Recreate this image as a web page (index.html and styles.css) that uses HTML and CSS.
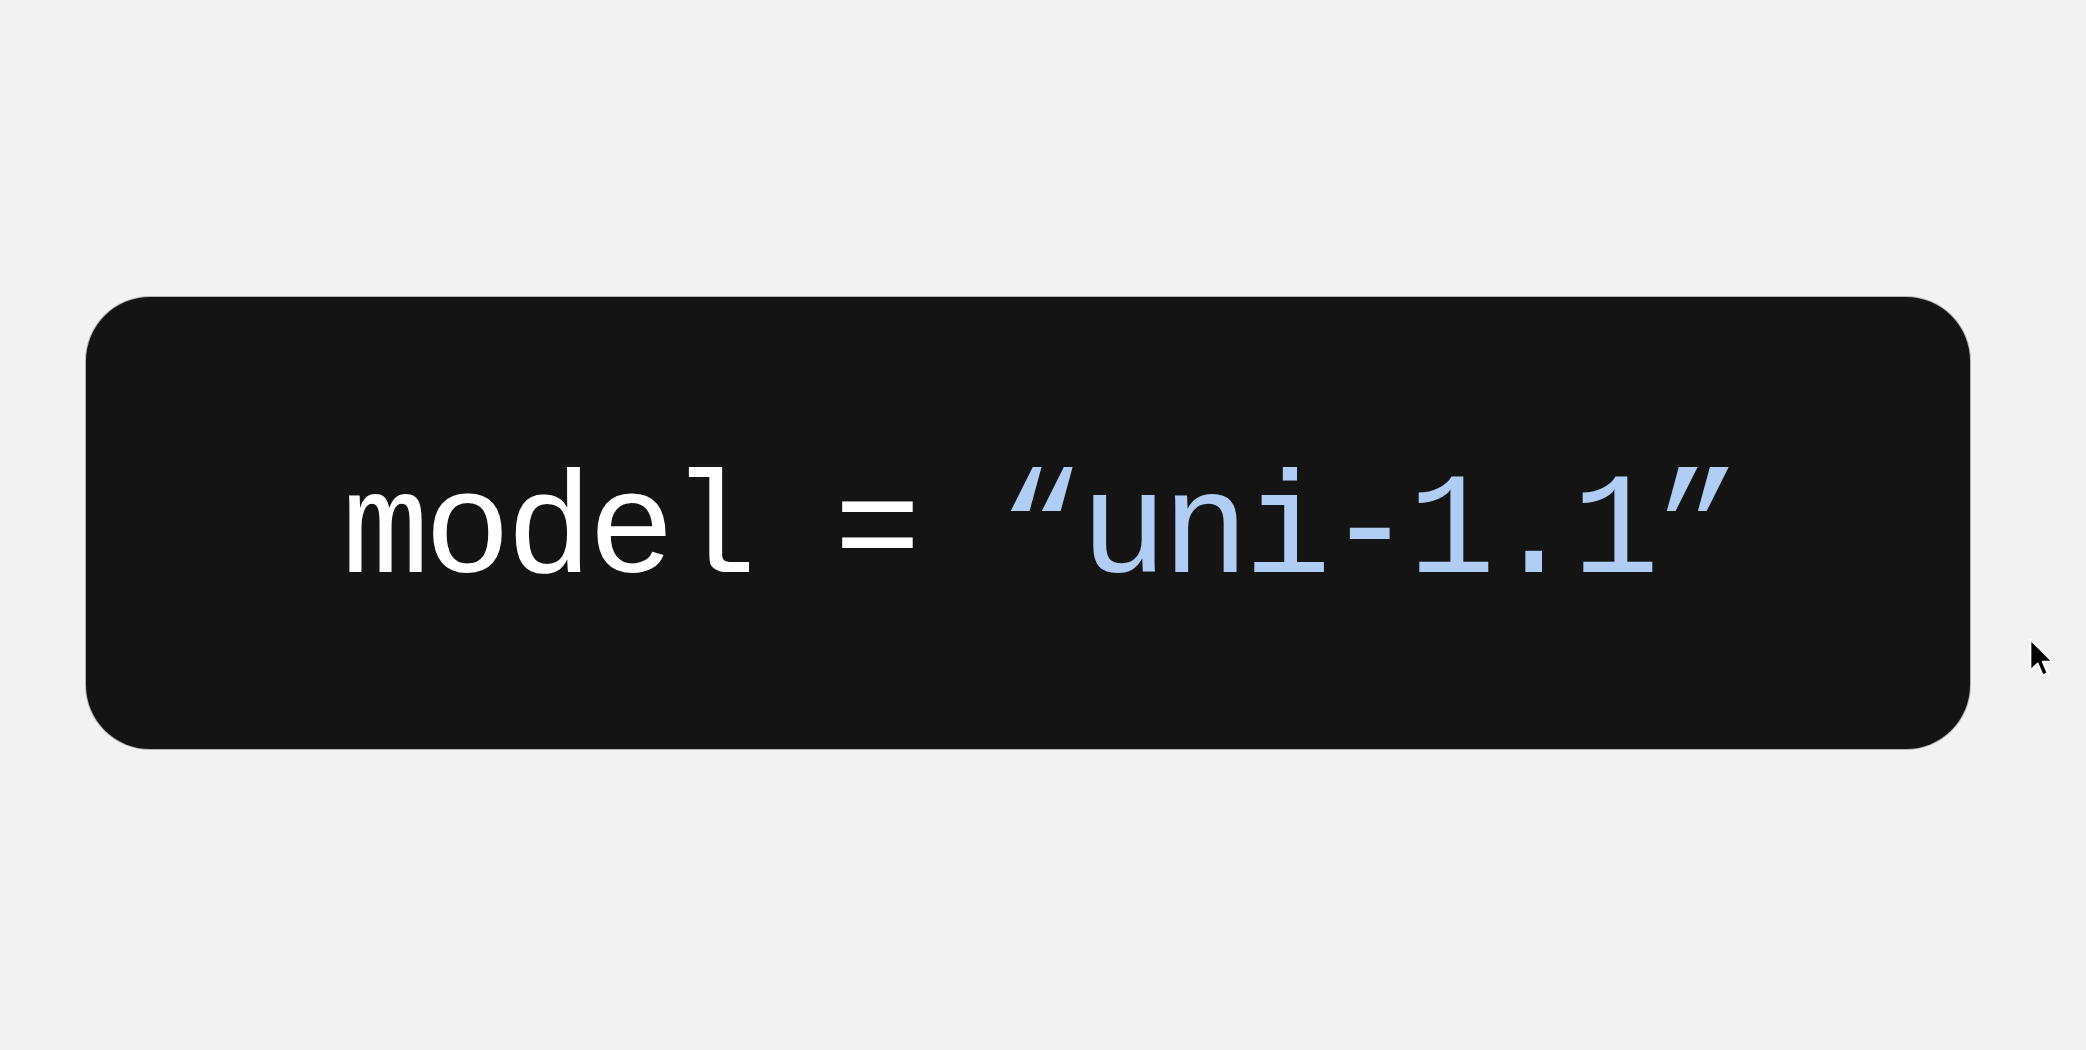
FILE: index.html
```html
<!DOCTYPE html>
<html>
<head>
<meta charset="utf-8">
<link rel="stylesheet" href="styles.css">
</head>
<body>
<main class="stage">
  <div class="code-card">
    <code class="code-line"><span class="ident">model</span> <span class="op">=</span> <span class="str">“uni-1.1”</span></code>
  </div>
</main>
<svg class="cursor" width="29" height="46" viewBox="0 0 19 30">
  <path d="M1.5 1.5 L1.5 22 L6.3 17.4 L9.6 25.2 L13 23.7 L9.8 16.2 L16.2 16.2 Z" fill="#000" stroke="#fff" stroke-width="1.4" stroke-linejoin="round"/>
</svg>
</body>
</html>
```

FILE: styles.css
```css
html, body {
  margin: 0;
  padding: 0;
  background: #f2f2f2;
  width: 2086px;
  height: 1050px;
  overflow: hidden;
}
.stage {
  padding: 297px 0 0 86px;
}
.code-card {
  box-sizing: border-box;
  width: 1884px;
  height: 452px;
  background: #141414;
  border-radius: 64px;
  box-shadow: 0 0 0 1px rgba(0,0,0,0.25);
  padding: 168px 0 0 256px;
}
.code-line {
  display: block;
  font-family: "Liberation Mono", "DejaVu Sans Mono", monospace;
  font-size: 145px;
  letter-spacing: -5px;
  line-height: 137px;
  white-space: pre;
  color: #ffffff;
}
.str {
  color: #b1cdf3;
}
.cursor {
  position: absolute;
  left: 2028px;
  top: 637px;
}
```
